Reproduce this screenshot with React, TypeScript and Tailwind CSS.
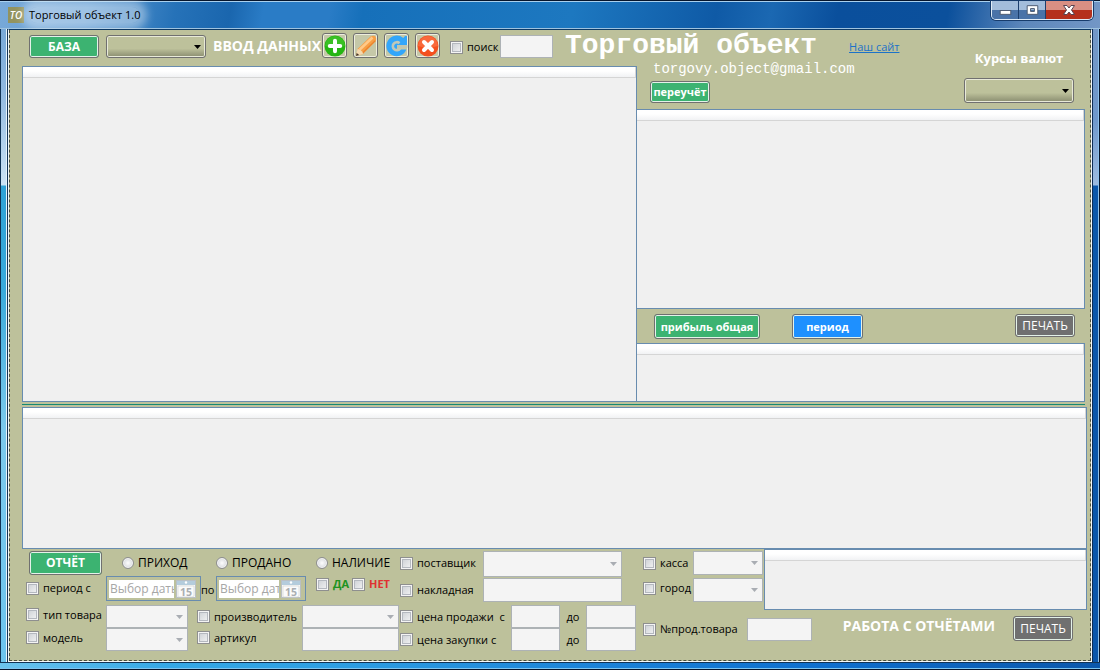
import React from "react";

const SANS = "font-['Open_Sans','Noto_Sans',sans-serif]";

function Arrow({ dim }: { dim?: boolean }) {
  return (
    <svg
      className={`pointer-events-none absolute top-1/2 right-[5px] -mt-0.5 h-1 w-[7px] ${dim ? "text-[#a9adb3]" : "text-black"}`}
      viewBox="0 0 7 4"
      aria-hidden="true"
    >
      <path d="M0 0H7L3.5 4Z" fill="currentColor" />
    </svg>
  );
}

function Combo({ label, className }: { label: string; className: string }) {
  return (
    <span className={`relative block shrink-0 ${className}`}>
      <select
        aria-label={label}
        className="block h-full w-full appearance-none rounded-[3px] border border-[#707070] bg-linear-to-b from-[#bdc19b] from-60% to-[#8a8d70] shadow-[inset_0_0_0_1px_#e8ead8]"
      >
        <option value=""></option>
      </select>
      <Arrow />
    </span>
  );
}

function DisabledCombo({ label, className }: { label: string; className: string }) {
  return (
    <span className={`relative block shrink-0 ${className}`}>
      <select
        disabled
        aria-label={label}
        className="block h-full w-full appearance-none border border-[#adb2b5] bg-[#f4f4f4] opacity-100"
      >
        <option value=""></option>
      </select>
      <Arrow dim />
    </span>
  );
}

function Field({ label, className }: { label: string; className: string }) {
  return (
    <input
      type="text"
      aria-label={label}
      className={`block shrink-0 border border-[#adb2b5] bg-[#f4f4f4] px-1 text-xs ${className}`}
    />
  );
}

function Check({
  text,
  className = "",
  textClass = "text-[11px]",
}: {
  text: string;
  className?: string;
  textClass?: string;
}) {
  return (
    <label className={`flex shrink-0 items-center gap-1 whitespace-nowrap ${className}`}>
      <input
        type="checkbox"
        className="size-[13px] shrink-0 appearance-none border border-[#8e8f8f] bg-linear-to-br from-[#c9cdd2] to-[#f6f6f6] shadow-[inset_0_0_0_1px_#f4f4f4,inset_0_0_0_2px_#b4b8bf] checked:bg-[#3cb371]"
      />
      <span className={textClass}>{text}</span>
    </label>
  );
}

function Radio({ text, className = "" }: { text: string; className?: string }) {
  return (
    <label className={`flex shrink-0 items-center gap-1 text-xs whitespace-nowrap ${className}`}>
      <input
        type="radio"
        name="report"
        className="size-3 shrink-0 appearance-none rounded-full border border-[#8e8f8f] bg-radial from-[#fdfdfd] to-[#c9cdd2] shadow-[inset_0_0_0_1px_#f4f4f4] checked:bg-[#3cb371]"
      />
      <span>{text}</span>
    </label>
  );
}

function Btn({
  children,
  className,
}: {
  children: React.ReactNode;
  className: string;
}) {
  return (
    <button
      type="button"
      className={`flex shrink-0 items-center justify-center rounded-[3px] border border-[#707070] whitespace-nowrap text-white shadow-[inset_0_0_0_1px_#e4f2e9] ${className}`}
    >
      {children}
    </button>
  );
}

function IconBtn({ label, children }: { label: string; children: React.ReactNode }) {
  return (
    <button
      type="button"
      aria-label={label}
      className="flex size-[25px] shrink-0 items-center justify-center rounded-[3px] border border-[#707070] bg-[#c5c8a8] shadow-[inset_0_0_0_1px_#eeeedd]"
    >
      <svg viewBox="0 0 22 22" className="size-[22px]" aria-hidden="true">
        {children}
      </svg>
    </button>
  );
}

function Panel({ className = "" }: { className?: string }) {
  return (
    <section className={`border border-[#688caf] bg-[#f0f0f0] ${className}`}>
      <div className="h-[11px] border-r border-b border-[#d5d5d5] bg-linear-to-b from-white from-40% to-[#f1f2f4]" />
    </section>
  );
}

function DateBox({ label, className }: { label: string; className: string }) {
  return (
    <div className={`flex h-[25px] shrink-0 items-center justify-between border border-[#688caf] pr-1 pl-0.5 ${className}`}>
      <input
        type="text"
        aria-label={label}
        placeholder="Выбор даты"
        className="h-[18px] w-full min-w-0 bg-white pl-px text-xs placeholder:text-[#a6a6a6]"
      />
      <button type="button" aria-label="Календарь" className="ml-0.5 shrink-0">
        <svg viewBox="0 0 20 18" className="block h-[18px] w-5" aria-hidden="true">
          <rect x="0.5" y="0.5" width="19" height="17" fill="#f7f7f5" stroke="#b9bfc4" />
          <rect x="1" y="1" width="18" height="4" fill="#b4ccdc" />
          <circle cx="10" cy="2.5" r="1.2" fill="#fff" />
          <path d="M2 6H18V16L16 17H2Z" fill="#fbfbfb" stroke="#ced1d2" strokeWidth="0.6" />
          <text x="10" y="15.5" fontSize="10.5" fontWeight="bold" textAnchor="middle" fill="#a9aeb2" fontFamily="Open Sans">
            15
          </text>
        </svg>
      </button>
    </div>
  );
}

function TitleBar() {
  return (
    <header className="flex h-[29px] shrink-0 items-start justify-between border-t border-[#06152c] bg-[linear-gradient(100deg,#78a9d8_0%,#5f9bd3_8%,#2672b8_16%,#1a66ae_21%,#2a7cc6_24%,#2a7cc6_30%,#1670ba_33%,#1d78c0_52%,#0f5aa6_65%,#1b68b2_70%,#0a4f9c_76%,#0b509c_86%,#5d87bb_93%,#7397c6_100%)] pl-2 shadow-[inset_0_1px_0_#a9d0ee,inset_0_-1px_0_#9fc3df]">
      <div className="mt-1.5 flex items-center gap-[5px]">
        <span className="flex size-4 items-center justify-center bg-[#92935f] text-[10px] leading-3 font-semibold text-white italic">
          TO
        </span>
        <h1 className="rounded-full bg-white/40 text-[11px] leading-4 text-black shadow-[0_0_8px_7px_rgba(255,255,255,0.4)]">
          Торговый объект 1.0
        </h1>
      </div>
      <div className="mr-[7px] flex h-[19px] overflow-hidden rounded-b-[5px] border border-t-0 border-[#e0ecf7] shadow-[0_0_0_1px_#173c6c]">
        <button type="button" aria-label="Свернуть" className="flex w-[27px] items-center justify-center border-r border-[#1c3e6c] bg-linear-to-b from-[#a3bddb] from-50% to-[#4a73a8] to-50%">
          <svg viewBox="0 0 27 18" className="h-[18px] w-[27px]" aria-hidden="true">
            <rect x="8.5" y="9.5" width="11" height="4" fill="#fff" stroke="#4c5a70" />
          </svg>
        </button>
        <button type="button" aria-label="Развернуть" className="flex w-[27px] items-center justify-center border-r border-[#1c3e6c] bg-linear-to-b from-[#a3bddb] from-50% to-[#4a73a8] to-50%">
          <svg viewBox="0 0 27 18" className="h-[18px] w-[27px]" aria-hidden="true">
            <path d="M8.500 4.500H19.500V13.500H8.500ZM12 7.500V10.500H16V7.500Z" fill="#fff" fillRule="evenodd" stroke="#4c5a70" />
          </svg>
        </button>
        <button type="button" aria-label="Закрыть" className="flex w-[46px] items-center justify-center bg-linear-to-b from-[#d98f83] from-50% to-[#b5301c] to-50%">
          <svg viewBox="0 0 46 18" className="h-[18px] w-[46px]" aria-hidden="true">
            <path d="M17.500 4.500H21L23 7L25 4.500H28.500L25.500 9L28.500 13.500H25L23 11L21 13.500H17.500L20.500 9Z" fill="#fff" stroke="#5a4450" />
          </svg>
        </button>
      </div>
    </header>
  );
}

function Toolbar() {
  return (
    <div className="flex h-9 shrink-0 items-start pt-1 pl-[7px]">
      <Btn className="mt-px h-[23px] w-[70px] bg-[#3cb371] text-xs font-bold">БАЗА</Btn>
      <Combo label="Таблица" className="mt-px ml-[7px] h-[23px] w-[100px]" />
      <h2 className="ml-[7px] w-[109px] text-[14px] leading-6 font-bold whitespace-nowrap text-white">ВВОД ДАННЫХ</h2>
      <div className="-mt-px flex gap-1.5">
        <IconBtn label="Добавить">
          <circle cx="11" cy="11" r="10.500" fill="#25b512" />
          <path d="M1 11A10 10 0 0 1 21 11Q11 14 1 11Z" fill="#4bc832" opacity="0.6" />
          <path d="M11 5.800V16.200M5.800 11H16.200" stroke="#fff" strokeWidth="4" strokeLinecap="round" />
        </IconBtn>
        <IconBtn label="Изменить">
          <path d="M1 21L2.500 14L15.500 1.500Q18.500 0 20.500 1.500Q22 4 20.500 6.500L8 19Z" fill="#f79f45" />
          <path d="M4.800 14.500L17.500 2.500" stroke="#ffc988" strokeWidth="2.600" />
          <path d="M7.500 18L20.300 5.600" stroke="#e9822f" strokeWidth="1.200" />
          <path d="M1 21L2.500 14L5 14.500L7.500 17L8 19Z" fill="#f3d9b0" />
          <path d="M1 21L1.700 18L4.200 20Z" fill="#43372c" />
        </IconBtn>
        <IconBtn label="Обновить">
          <path d="M21 1V10H11V14.500H20.300A10.300 10.300 0 1 1 17.300 3L19 1Z" fill="#33a6fa" />
          <path d="M13.500 8.200A4 4 0 1 0 14 13.600" fill="none" stroke="#c3c8b8" strokeWidth="2.600" />
          <path d="M11 11.400H21.500" stroke="#c3c6ae" strokeWidth="2.800" />
        </IconBtn>
        <IconBtn label="Удалить">
          <circle cx="11" cy="11" r="10.500" fill="#f4501e" />
          <path d="M1 11A10 10 0 0 1 21 11Q11 14 1 11Z" fill="#fb7a4e" opacity="0.6" />
          <path d="M7 7L15 15M15 7L7 15" stroke="#fff" strokeWidth="4" strokeLinecap="round" />
        </IconBtn>
      </div>
      <Check text="поиск" className="ml-2.5 h-[26px] w-[50px]" />
      <Field label="Поиск" className="mt-px h-[23px] w-[53px]" />
    </div>
  );
}

function TopRight() {
  return (
    <div className="flex h-[79px] shrink-0 justify-between">
      <div>
        <div className="-ml-[72px] flex items-start">
          <h2 className="font-['Courier_New','Liberation_Mono',monospace] text-[28px] leading-8 font-bold whitespace-nowrap text-white">
            Торговый объект
          </h2>
          <a href="#site" className="ml-8 pt-2 text-[11px] leading-[18px] whitespace-nowrap text-[#1c72c8] underline">
            Наш сайт
          </a>
        </div>
        <p className="ml-4 font-['Courier_New','Liberation_Mono',monospace] text-[14px] leading-[14px] text-white">
          torgovy.object@gmail.com
        </p>
        <Btn className="mt-[5px] ml-[13px] h-[22px] w-[60px] bg-[#3cb371] text-[11px] font-bold">переучёт</Btn>
      </div>
      <div className="mr-[11px] flex w-[110px] flex-col items-center pt-[18px]">
        <h2 className="text-[13px] leading-5 font-bold whitespace-nowrap text-white">Курсы валют</h2>
        <Combo label="Курсы валют" className="mt-2.5 h-[25px] w-full" />
      </div>
    </div>
  );
}

function Filters() {
  return (
    <footer className="flex h-[111px] shrink-0">
      <div className="flex w-[378px] shrink-0 flex-col pt-0.5 pl-1">
        <div className="flex h-[25px] items-start">
          <Btn className="ml-[3px] h-6 w-[73px] bg-[#3cb371] text-xs font-bold">ОТЧЁТ</Btn>
          <Radio text="ПРИХОД" className="ml-5 h-6 w-[94px]" />
          <Radio text="ПРОДАНО" className="h-6 w-[100px]" />
          <Radio text="НАЛИЧИЕ" className="h-6" />
        </div>
        <div className="flex h-[29px] items-start">
          <Check text="период с" className="mt-1 w-20" />
          <DateBox label="Дата с" className="w-[95px]" />
          <span className="mt-1.5 w-[15px] text-[11px]">по</span>
          <DateBox label="Дата по" className="w-[90px]" />
          <Check text="ДА" className="ml-2.5 w-9" textClass="text-[11px] font-bold text-[#1f931f]" />
          <Check text="НЕТ" textClass="text-[11px] font-bold text-[#e03131]" />
        </div>
        <div className="flex h-[23px] items-stretch">
          <Check text="тип товара" className="w-20 pb-1" />
          <DisabledCombo label="Тип товара" className="w-[82px]" />
          <Check text="производитель" className="ml-[9px] w-[105px]" />
          <DisabledCombo label="Производитель" className="w-[97px]" />
        </div>
        <div className="flex h-[23px] items-stretch">
          <Check text="модель" className="w-20 pb-1" />
          <DisabledCombo label="Модель" className="w-[82px]" />
          <Check text="артикул" className="ml-[9px] w-[105px] pb-1" />
          <Field label="Артикул" className="w-[97px]" />
        </div>
      </div>

      <div className="flex w-[243px] shrink-0 flex-col pt-0.5">
        <div className="flex h-[27px] items-start">
          <Check text="поставщик" className="h-6 w-[83px]" />
          <DisabledCombo label="Поставщик" className="h-[26px] w-[139px]" />
        </div>
        <div className="flex h-[27px] items-start">
          <Check text="накладная" className="h-6 w-[83px]" />
          <Field label="Накладная" className="h-6 w-[139px]" />
        </div>
        <div className="flex h-[23px] items-stretch">
          <Check text="цена продажи  с" textClass="text-[11px] whitespace-pre" className="w-[111px]" />
          <Field label="Цена продажи с" className="w-[49px]" />
          <span className="w-[26px] pt-1 text-center text-[11px]">до</span>
          <Field label="Цена продажи до" className="w-[50px]" />
        </div>
        <div className="flex h-[23px] items-stretch">
          <Check text="цена закупки с" className="w-[111px]" />
          <Field label="Цена закупки с" className="w-[49px]" />
          <span className="w-[26px] pt-1 text-center text-[11px]">до</span>
          <Field label="Цена закупки до" className="w-[50px]" />
        </div>
      </div>

      <div className="flex min-w-0 flex-1 flex-col">
        <div className="flex h-[61px]">
          <div className="w-[121px] shrink-0 pt-0.5">
            <div className="flex h-[27px] items-start">
              <Check text="касса" className="h-6 w-[50px]" />
              <DisabledCombo label="Касса" className="h-6 w-[70px]" />
            </div>
            <div className="flex h-[27px] items-start">
              <Check text="город" className="h-5 w-[50px]" />
              <DisabledCombo label="Город" className="h-6 w-[70px]" />
            </div>
          </div>
          <Panel className="min-w-0 flex-1" />
        </div>
        <div className="flex items-start pt-1.5">
          <Check text="№прод.товара" className="h-[26px] w-[104px]" />
          <Field label="Номер проданного товара" className="mt-0.5 h-[23px] w-[65px]" />
          <h2 className="ml-auto text-[14px] leading-5 font-bold whitespace-nowrap text-white">РАБОТА С ОТЧЁТАМИ</h2>
          <Btn className="mr-3.5 ml-[18px] h-[25px] w-[60px] bg-[#707070] text-xs">ПЕЧАТЬ</Btn>
        </div>
      </div>
    </footer>
  );
}

export default function App() {
  return (
    <div className={`flex min-h-screen flex-col bg-[#06152c] leading-4 text-black ${SANS}`}>
      <TitleBar />
      <div className="flex flex-1">
        <div className="w-2 shrink-0 border-x border-r-[#123456] border-l-[#123456] bg-[linear-gradient(to_bottom,#78a9d8_0px,#8fb8e0_60px,#cde3f4_156px,#2fa2d6_157px,#3aaadb_260px,#7cc9ec_400px,#6cc4ee_100%)] shadow-[inset_-1px_0_0_#e8f4fb]" />
        <main className="flex min-w-0 flex-1 flex-col border border-t-[#0d3a66] border-r-[#f4f8fb] border-b-[#f4f8fb] border-l-[#f4f8fb] bg-[#bdc19b]">
          <div className="flex flex-1 flex-col border-r border-b border-l border-dashed border-[#4c4e3e] pr-[3px] pl-3">
            <div className="mr-0.5 flex flex-1">
              <div className="flex w-[615px] shrink-0 flex-col">
                <Toolbar />
                <Panel className="flex-1" />
              </div>
              <div className="flex min-w-0 flex-1 flex-col">
                <TopRight />
                <Panel className="flex-1 border-l-0" />
                <div className="flex h-[34px] shrink-0 items-start pt-[5px] pr-2.5 pl-[17px]">
                  <Btn className="h-[25px] w-[106px] bg-[#3cb371] text-[11px] font-bold">прибыль общая</Btn>
                  <Btn className="ml-8 h-[25px] w-[71px] bg-[#1e90ff] text-[11px] font-bold">период</Btn>
                  <Btn className="ml-auto h-[23px] w-[60px] bg-[#707070] text-xs">ПЕЧАТЬ</Btn>
                </div>
                <Panel className="h-[59px] shrink-0 border-l-0" />
              </div>
            </div>
            <hr className="mt-0.5 mr-0.5 mb-0.5 border-t border-[#168a72]" />
            <Panel className="h-[142px] shrink-0" />
            <Filters />
          </div>
        </main>
        <div className="w-2 shrink-0 border-x border-r-[#06152c] border-l-[#0d2c55] bg-[linear-gradient(to_bottom,#7397c6_0px,#6f98cc_90px,#9dbbe0_156px,#0b57ab_157px,#0a56ab_100%)] shadow-[inset_-1px_0_0_#8ec0ea]" />
      </div>
      <div className="h-2 shrink-0 border-y border-t-[#123456] border-b-[#06152c] bg-[linear-gradient(to_right,#6cc4ee_0%,#35a8e6_15%,#2e9fe3_30%,#1b82d8_55%,#0f6fce_75%,#0b57ab_100%)] shadow-[inset_0_-1px_0_#7cc4f0]" />
    </div>
  );
}
